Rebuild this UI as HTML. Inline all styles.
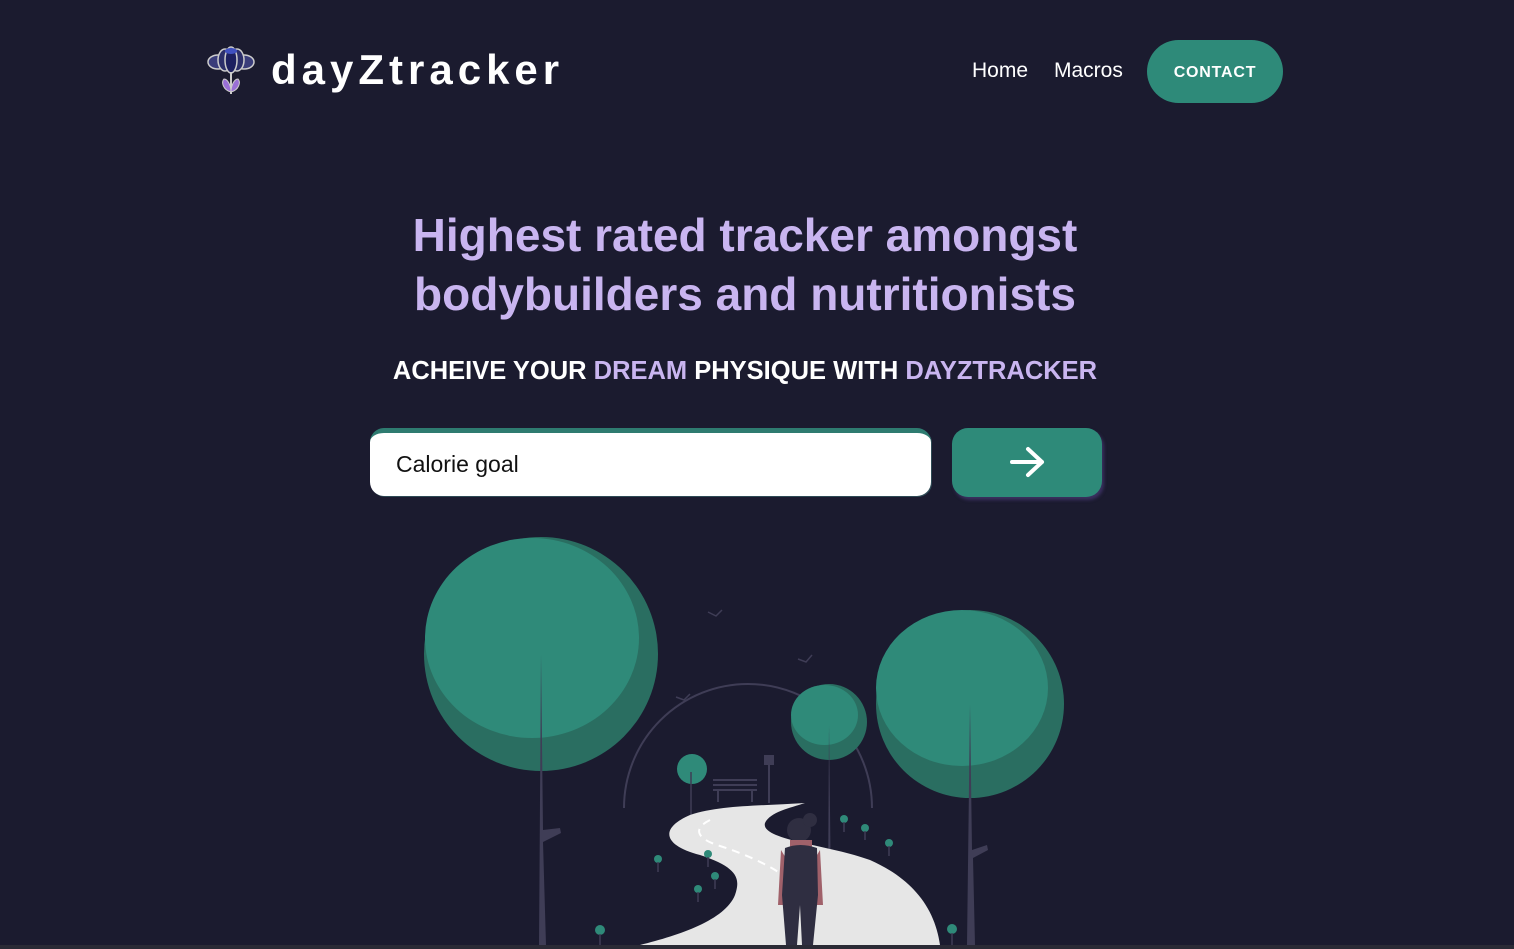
<!DOCTYPE html>
<html><head><meta charset="utf-8"><style>
*{margin:0;padding:0;box-sizing:border-box}
body{width:1514px;height:949px;background:#1b1b2f;font-family:"Liberation Sans",sans-serif;position:relative;overflow:hidden;color:#fff}
.logo{position:absolute;left:271px;top:46px;font-size:42px;font-weight:bold;letter-spacing:5px}
.nav{position:absolute;top:59px;font-size:21px}
.btn{position:absolute;left:1147px;top:40px;width:136px;height:63px;border-radius:32px;background:#2e8a79;font-weight:bold;font-size:16px;text-align:center;line-height:66px;letter-spacing:.8px}
h1{position:absolute;left:0;width:1490px;top:206px;text-align:center;font-size:46px;line-height:59px;color:#c9b5f0;font-weight:bold}
.sub{position:absolute;left:0;width:1490px;top:357px;text-align:center;font-size:25.5px;font-weight:bold}
.sub span{color:#c9b5f0}
.inp{position:absolute;left:370px;top:428px;width:561px;height:68px;border-radius:14px;background:#fff;border-top:5px solid #2e7b70;box-shadow:1px 1px 0 #2e4a55;font-size:23px;color:#111;padding:18px 0 0 26px}
.go{position:absolute;left:952px;top:428px;width:150px;height:69px;border-radius:16px;background:#2e8a79;box-shadow:2px 3px 3px #3a3060}
</style></head><body>
<svg style="position:absolute;left:205px;top:46px" width="52" height="50" viewBox="0 0 52 50">
<ellipse cx="13" cy="16" rx="10" ry="7" fill="#3a3d7a" stroke="#ccc" stroke-width="1.5"/>
<ellipse cx="39" cy="16" rx="10" ry="7" fill="#3a3d7a" stroke="#ccc" stroke-width="1.5"/>
<ellipse cx="20" cy="14" rx="7" ry="11" fill="#2c2f6a" stroke="#ccc" stroke-width="1.5"/>
<ellipse cx="32" cy="14" rx="7" ry="11" fill="#2c2f6a" stroke="#ccc" stroke-width="1.5"/>
<ellipse cx="26" cy="14" rx="6" ry="13" fill="#1d2060" stroke="#ccc" stroke-width="1.5"/>
<ellipse cx="26" cy="5" rx="6" ry="3" fill="#4050c0"/>
<path d="M26 26 V48" stroke="#ccc" stroke-width="2"/>
<path d="M26 46 C18 44 16 36 19 33 C23 33 26 40 26 46Z M26 46 C34 44 36 36 33 33 C29 33 26 40 26 46Z" fill="#9a6fd6" stroke="#ccc" stroke-width="1"/>
</svg>
<div class="logo">dayZtracker</div>
<div class="nav" style="left:972px">Home</div>
<div class="nav" style="left:1054px">Macros</div>
<div class="btn">CONTACT</div>
<h1>Highest rated tracker amongst<br>bodybuilders and nutritionists</h1>
<div class="sub">ACHEIVE YOUR <span>DREAM</span> PHYSIQUE WITH <span>DAYZTRACKER</span></div>
<div class="inp">Calorie goal</div>
<div class="go"><svg width="150" height="69"><path d="M60 34 H90 M76 21 L90 34 L76 47" stroke="#fff" stroke-width="4" fill="none" stroke-linecap="round" stroke-linejoin="round"/></svg></div>
<svg style="position:absolute;left:0;top:0" width="1514" height="949" viewBox="0 0 1514 949">
<path d="M624 808 A124 124 0 0 1 872 808" stroke="#3f3d56" stroke-width="2" fill="none"/>
<circle cx="541" cy="654" r="117" fill="#2a6e61"/>
<ellipse cx="532" cy="638" rx="107" ry="100" fill="#2f8a79"/>
<path d="M539 945 L541 655 L543 830 L560 828 L561 833 L543 842 L546 945Z" fill="#3f3d56"/>
<circle cx="970" cy="704" r="94" fill="#2a6e61"/>
<ellipse cx="962" cy="688" rx="86" ry="78" fill="#2f8a79"/>
<path d="M967 945 L970 705 L972 850 L987 845 L988 850 L973 858 L975 945Z" fill="#3f3d56"/>
<circle cx="829" cy="722" r="38" fill="#2a6e61"/>
<ellipse cx="824.5" cy="715" rx="33.5" ry="30" fill="#2f8a79"/>
<path d="M828 895 L829 725 L831 895Z" fill="#3f3d56"/>
<circle cx="692" cy="769" r="15" fill="#2f8a79"/>
<path d="M691 820 V772" stroke="#3f3d56" stroke-width="1.5"/>
<g stroke="#3f3d56" stroke-width="2"><path d="M713 780 H757 M713 785 H757 M713 790 H757 M718 790 V802 M752 790 V802"/><path d="M769 760 V803"/></g>
<rect x="764" y="755" width="10" height="10" fill="#3f3d56"/>
<path d="M805 803 C760 806 720 805 690 815 C660 828 662 845 700 855 C740 868 740 880 735 895 C725 920 680 935 640 945 L940 945 C935 910 915 880 870 860 C830 845 760 840 765 823 C770 812 790 808 805 803Z" fill="#e6e6e6"/>
<path d="M710 820 C690 830 700 840 720 846 C745 854 770 865 790 880" stroke="#fff" stroke-width="2" stroke-dasharray="8 6" fill="none"/>
<g fill="#2f8a79"><circle cx="658" cy="859" r="4"/><circle cx="708" cy="854" r="4"/><circle cx="715" cy="876" r="4"/><circle cx="698" cy="889" r="4"/><circle cx="600" cy="930" r="5"/><circle cx="844" cy="819" r="4"/><circle cx="865" cy="828" r="4"/><circle cx="889" cy="843" r="4"/><circle cx="952" cy="929" r="5"/></g>
<g stroke="#3f3d56" stroke-width="1.5" fill="none"><path d="M658 862 V872 M708 857 V867 M715 879 V889 M698 892 V902 M600 934 V945 M844 822 V832 M865 831 V840 M889 846 V856 M952 933 V945"/><path d="M708 612 L716 616 L722 610 M798 659 L806 662 L812 655 M676 697 L684 700 L690 694"/></g>
<circle cx="799" cy="830" r="12" fill="#2f2e41"/><circle cx="810" cy="820" r="7" fill="#2f2e41"/>
<path d="M790 840 H812 V848 H790Z" fill="#a0616a"/>
<path d="M781 850 L778 905 L784 905 L787 860Z M820 850 L823 905 L817 905 L814 860Z" fill="#a0616a"/>
<path d="M785 848 Q800 842 817 848 L818 895 L813 945 L802 945 L800 905 L797 945 L786 945 L782 895Z" fill="#2f2e41"/>
<rect x="0" y="945" width="1514" height="4" fill="#2a2a35"/>
</svg>
</body></html>
